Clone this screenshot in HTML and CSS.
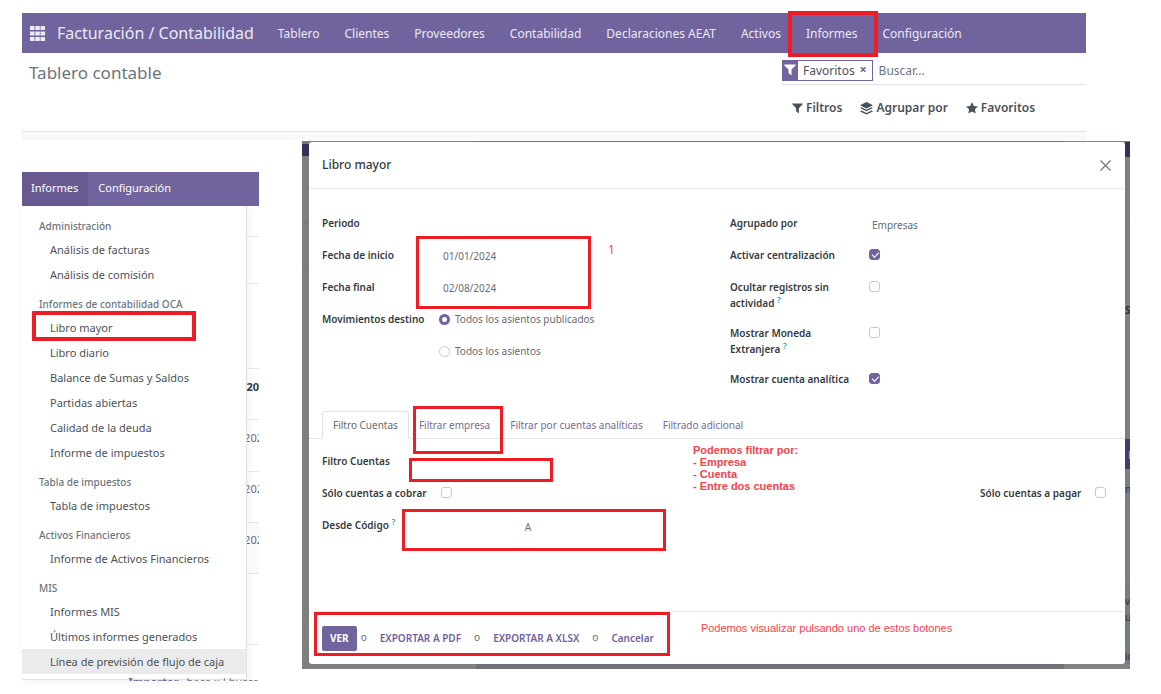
FILE: index.html
```html
<!DOCTYPE html>
<html lang="es">
<head>
<meta charset="utf-8">
<title>Tablero contable</title>
<link rel="stylesheet" href="styles.css">
</head>
<body>
<header class="top">
  <nav class="navbar">
    <button class="apps" aria-label="Aplicaciones">
      <svg viewBox="0 0 15 15" width="15" height="15" fill="currentColor"><path d="M0 0h4.500v4H0zM5.300 0h4.500v4H5.300zM10.500 0H15v4h-4.500zM0 5.500h4.500v4H0zM5.300 5.500h4.500v4H5.300zM10.500 5.500H15v4h-4.500zM0 11h4.500v4H0zM5.300 11h4.500v4H5.300zM10.500 11H15v4h-4.500z"/></svg>
    </button>
    <a class="brand" href="#">Facturación / Contabilidad</a>
    <a class="nav-link" href="#">Tablero</a>
    <a class="nav-link" href="#">Clientes</a>
    <a class="nav-link" href="#">Proveedores</a>
    <a class="nav-link" href="#">Contabilidad</a>
    <a class="nav-link" href="#">Declaraciones AEAT</a>
    <a class="nav-link" href="#">Activos</a>
    <a class="nav-link mark mark-nav" href="#">Informes</a>
    <a class="nav-link" href="#">Configuración</a>
  </nav>
  <div class="control">
    <h1 class="page-title">Tablero contable</h1>
    <div class="search">
      <div class="search-box">
        <span class="facet">
          <span class="facet-icon"><svg viewBox="0 0 12 12" width="12" height="12" fill="currentColor"><path d="M.6.5h10.8q.6.3.2.9L7.500 5.600V11.500L4.500 9V5.600L.4 1.400Q0 .8.600.5z"/></svg></span>
          <span class="facet-name">Favoritos</span>
          <button class="facet-remove" aria-label="Quitar">×</button>
        </span>
        <input class="search-input" type="text" placeholder="Buscar..." aria-label="Buscar">
      </div>
      <div class="filters">
        <button class="filter"><svg viewBox="0 0 12 12" width="11" height="11" fill="currentColor"><path d="M.6.5h10.8q.6.3.2.9L7.500 5.600V11.500L4.500 9V5.600L.4 1.400Q0 .8.600.5z"/></svg>Filtros</button>
        <button class="filter"><svg viewBox="0 0 13 13" width="13" height="13" fill="currentColor"><path d="M6.500 0 13 3.200 6.500 6.400 0 3.200z"/><path d="M1.500 5.300 6.500 7.700l5-2.400 1.500.8-6.500 3.200L0 6.100z"/><path d="M1.500 8.600 6.500 11l5-2.400 1.500.8-6.500 3.200L0 9.400z"/></svg>Agrupar por</button>
        <button class="filter"><svg viewBox="0 0 12 12" width="12" height="12" fill="currentColor"><path d="M6 0l1.800 3.900 4.200.5-3.100 2.900.8 4.300L6 9.500l-3.700 2.100.8-4.300L0 4.400l4.200-.5z"/></svg>Favoritos</button>
      </div>
    </div>
  </div>
</header>

<main class="stage">
  <section class="menu-panel">
    <nav class="menu-bar">
      <a class="menu-tab active" href="#">Informes</a>
      <a class="menu-tab" href="#">Configuración</a>
    </nav>
    <div class="menu-body">
      <div class="menu">
        <h2 class="menu-head">Administración</h2>
        <a class="menu-item" href="#">Análisis de facturas</a>
        <a class="menu-item" href="#">Análisis de comisión</a>
        <h2 class="menu-head">Informes de contabilidad OCA</h2>
        <a class="menu-item mark mark-menu" href="#">Libro mayor</a>
        <a class="menu-item" href="#">Libro diario</a>
        <a class="menu-item" href="#">Balance de Sumas y Saldos</a>
        <a class="menu-item" href="#">Partidas abiertas</a>
        <a class="menu-item" href="#">Calidad de la deuda</a>
        <a class="menu-item" href="#">Informe de impuestos</a>
        <h2 class="menu-head">Tabla de impuestos</h2>
        <a class="menu-item" href="#">Tabla de impuestos</a>
        <h2 class="menu-head">Activos Financieros</h2>
        <a class="menu-item" href="#">Informe de Activos Financieros</a>
        <h2 class="menu-head">MIS</h2>
        <a class="menu-item" href="#">Informes MIS</a>
        <a class="menu-item" href="#">Últimos informes generados</a>
        <a class="menu-item current" href="#">Línea de previsión de flujo de caja</a>
      </div>
      <div class="behind">
        <div class="cell h31"></div>
        <div class="cell h47"></div>
        <div class="cell h85"></div>
        <div class="cell h51 year">20</div>
        <div class="cell h52 date">202</div>
        <div class="cell h51 date">202</div>
        <div class="cell h51 date tint">202</div>
        <div class="cell h71"></div>
      </div>
    </div>
    <div class="cutoff"><b>Importar</b> <span>hace × l busca</span></div>
  </section>

  <section class="backdrop">
    <div class="edge-left"></div>
    <form class="dialog">
      <header class="dialog-head">
        <h2 class="dialog-title">Libro mayor</h2>
        <button class="close" type="button" aria-label="Cerrar"><svg viewBox="0 0 11 11" width="11" height="11" stroke="currentColor" stroke-width="1.300" fill="none"><path d="M.5.5l10 10M10.500.5l-10 10"/></svg></button>
      </header>
      <div class="fields">
        <div class="col">
          <div class="row"><span class="label">Periodo</span></div>
          <div class="dates mark mark-dates">
            <div class="row"><label class="label" for="ini">Fecha de inicio</label><input class="text" id="ini" type="text" value="01/01/2024"></div>
            <div class="row"><label class="label" for="fin">Fecha final</label><input class="text" id="fin" type="text" value="02/08/2024"></div>
            <span class="note note-one">1</span>
          </div>
          <div class="row"><span class="label">Movimientos destino</span><label class="option"><input class="radio" type="radio" name="mov" checked>Todos los asientos publicados</label></div>
          <div class="row"><span class="label"></span><label class="option"><input class="radio" type="radio" name="mov">Todos los asientos</label></div>
        </div>
        <div class="col col-right">
          <div class="row"><label class="label" for="grp">Agrupado por</label><select class="select" id="grp"><option>Empresas</option></select></div>
          <div class="row"><label class="label" for="cen">Activar centralización</label><input class="check" id="cen" type="checkbox" checked></div>
          <div class="row tall"><label class="label" for="ocu">Ocultar registros sin actividad <span class="help">?</span></label><input class="check" id="ocu" type="checkbox"></div>
          <div class="row tall"><label class="label" for="mon">Mostrar Moneda Extranjera <span class="help">?</span></label><input class="check" id="mon" type="checkbox"></div>
          <div class="row"><label class="label" for="ana">Mostrar cuenta analítica</label><input class="check" id="ana" type="checkbox" checked></div>
        </div>
      </div>
      <div class="tabs">
        <button class="tab selected" type="button">Filtro Cuentas</button>
        <button class="tab mark mark-tab" type="button">Filtrar empresa</button>
        <button class="tab" type="button">Filtrar por cuentas analíticas</button>
        <button class="tab" type="button">Filtrado adicional</button>
      </div>
      <div class="pane">
        <div class="col">
          <div class="row"><label class="label" for="cta">Filtro Cuentas</label><span class="account mark mark-account"><input class="text" id="cta" type="text"></span></div>
          <div class="row"><label class="label" for="cob">Sólo cuentas a cobrar</label><input class="check" id="cob" type="checkbox"></div>
          <div class="row"><label class="label" for="cod">Desde Código <span class="help">?</span></label><span class="range mark mark-range"><input class="text" id="cod" type="text"><span class="to">A</span><input class="text" type="text" aria-label="Hasta código"></span></div>
        </div>
        <p class="note note-list">Podemos filtrar por:<br>- Empresa<br>- Cuenta<br>- Entre dos cuentas</p>
        <div class="payable"><label class="label" for="pag">Sólo cuentas a pagar</label><input class="check" id="pag" type="checkbox"></div>
      </div>
      <footer class="dialog-foot">
        <div class="actions mark mark-actions">
          <button class="primary" type="button">VER</button>
          <span class="or">o</span>
          <button class="link" type="button">EXPORTAR A PDF</button>
          <span class="or">o</span>
          <button class="link" type="button">EXPORTAR A XLSX</button>
          <span class="or">o</span>
          <button class="link" type="button">Cancelar</button>
        </div>
        <p class="note">Podemos visualizar pulsando uno de estos botones</p>
      </footer>
    </form>
    <div class="edge-right">
      <span class="bit s">S</span>
      <span class="bit e">E</span>
      <span class="bit n">n</span>
      <span class="bit v">v</span>
      <span class="bit u">u</span>
      <span class="bit i">ic</span>
    </div>
  </section>
</main>
</body>
</html>
```

FILE: styles.css
```css
* { box-sizing: border-box; }
body {
  margin: 0;
  padding: 13px 31px 12px 22px;
  background: #fff;
  color: #4c5157;
  font: 12px/16px "Noto Sans", "Open Sans", sans-serif;
}
h1, h2, p { margin: 0; font-weight: 400; }
a { color: inherit; text-decoration: none; }
button, input, select { font: inherit; color: inherit; background: none; border: 0; padding: 0; margin: 0; }
svg { display: block; flex: none; }

/* Red highlight frames */
.mark { position: relative; }
.mark::after { content: ""; position: absolute; border: 3px solid #ee1c25; pointer-events: none; }
.mark-nav::after { inset: -2px -21px -4px -18px; border-width: 4px; }
.mark-menu::after { inset: -4px 50px -1px 10px; border-width: 4px; }
.mark-dates::after { inset: -11px 126px 2px 94px; }
.mark-tab::after { inset: -6px -4px -16px 3px; }
.mark-account::after { inset: 0; }
.mark-range::after { inset: 0; }
.mark-actions::after { inset: 0; }

/* Top bar */
.top { margin-right: 44px; border-bottom: 8px solid #f8f9fa; }
.navbar { display: flex; align-items: center; gap: 25px; height: 40px; padding-left: 8px; background: #71639e; color: #eceaf3; white-space: nowrap; }
.apps { color: #eceaf3; margin-right: -13px; }
.brand { font-size: 16px; line-height: 24px; margin-right: -1px; }
.nav-link { line-height: 40px; height: 40px; padding-top: 1px; }
.control { display: flex; justify-content: space-between; height: 79px; padding-left: 7px; border-bottom: 1px solid #dee2e6; }
.page-title { font-size: 17px; line-height: 40px; color: #6c757d; }
.search { width: 304px; }
.search-box { display: flex; align-items: center; height: 32px; padding-top: 3px; border-bottom: 1px solid #dee2e6; }
.facet { display: flex; align-items: center; height: 21px; border: 1px solid #71639e; }
.facet-icon { display: flex; align-items: center; align-self: stretch; padding: 0 2px 0 1px; background: #71639e; color: #fff; }
.facet-name { padding: 2px 5px 0 5px; }
.facet-remove { padding-right: 5px; font-weight: 600; line-height: 16px; }
.search-input { flex: 1; min-width: 0; margin-left: 6px; padding-top: 2px; }
.search-input::placeholder { color: #6c757d; opacity: 1; }
.filters { display: flex; gap: 18px; padding: 15px 0 0 10px; }
.filter { display: flex; align-items: center; gap: 3px; font-weight: 600; color: #495057; white-space: nowrap; }

.stage { display: flex; align-items: flex-start; gap: 43px; }

/* Reports menu */
.menu-panel { flex: none; width: 237px; margin-top: 32px; font-size: 11px; }
.menu-bar { display: flex; height: 34px; background: #71639e; color: #fff; line-height: 32px; }
.menu-tab { padding: 0 10px; }
.menu-tab.active { padding-left: 9px; background: #685a91; }
.menu-body { display: flex; }
.menu { flex: 1; padding: 10px 0 5px; border: 1px solid #dee2e6; border-width: 0 1px 1px 0; box-shadow: 2px 2px 8px #0000000f; }
.menu-head { padding-left: 17px; font-size: 10px; line-height: 21px; font-weight: 500; color: #6c757d; }
.menu-item + .menu-head { margin-top: 7px; }
.menu-item { display: block; padding-left: 28px; line-height: 25px; white-space: nowrap; }
.menu-item.current { background: #ebebeb; }
.behind { width: 12px; overflow: hidden; }
.cell { display: flex; align-items: center; justify-content: flex-end; border-bottom: 1px solid #e3e5e8; }
.h31 { height: 31px; }
.h47 { height: 47px; }
.h51 { height: 51px; }
.h52 { height: 52px; }
.h71 { height: 71px; }
.h85 { height: 85px; }
.year { padding-bottom: 15px; font-weight: 700; color: #343a4a; }
.date { padding-bottom: 16px; margin-right: -4px; color: #5c6b84; }
.tint { background: #fafafa; }
.cutoff { display: flex; justify-content: flex-end; gap: 8px; height: 5px; margin-top: -4px; overflow: hidden; white-space: nowrap; line-height: 12px; color: #6c757d; }
.cutoff b { color: #71639e; }

/* Dialog and the dimmed page around it */
.backdrop {
  flex: 1;
  display: flex;
  min-width: 0;
  margin-top: 1px;
  padding: 1px 0 5px;
  background: linear-gradient(90deg, #7f7f7f 21%, #707078 21%, #707078 92%, #7f8383 92%);
}
.edge-left { width: 7px; background: linear-gradient(#777 2px, #3a3057 2px, #3a3057 14px, #7f7f7f 14px, #7f7f7f 80px, #747474 80px, #747474 81px, #7f7f7f 81px, #7f7f7f 127px, #747474 127px, #747474 128px, #7f7f7f 128px); }
.edge-right {
  position: relative;
  width: 5px;
  overflow: hidden;
  color: #2b3040;
  background: linear-gradient(#3a3057 15px, #7f7f7f 15px, #7f7f7f 81px, #747474 81px, #747474 82px, #7f7f7f 82px, #7f7f7f 297px, #463c66 297px, #463c66 327px, #778080 327px, #778080 365px, #7f7f7f 365px, #7f7f7f 441px, #757e7f 441px);
}
.bit { position: absolute; left: 0; font-size: 10px; }
.s { top: 160px; font-weight: 700; }
.e { top: 305px; left: 3px; color: #aaa4bb; }
.n { top: 339px; }
.v { top: 451px; }
.u { top: 467px; }
.i { top: 506px; }

.dialog { flex: 1; min-width: 0; background: #fff; border-radius: 3px; font-size: 10px; color: #666b71; }
.dialog-head { display: flex; align-items: center; justify-content: space-between; height: 47px; padding: 0 14px 0 13px; border-bottom: 1px solid #e9ebed; }
.dialog-title { font-size: 12px; font-weight: 500; color: #343a40; }
.close { color: #777; }
.fields { display: grid; grid-template-columns: 1fr 1fr; padding: 26px 13px 0; height: 222px; }
.row { display: flex; align-items: flex-start; min-height: 32px; }
.label { flex: none; width: 117px; color: #343a40; font-weight: 600; white-space: nowrap; }
.col-right { padding-left: 13px; }
.col-right .label { width: 139px; }
.tall { min-height: 46px; }
.tall .label { padding-right: 30px; white-space: normal; }
.help { font-size: 8px; line-height: 8px; vertical-align: 4px; color: #1ba0b8; }
.text { width: 100px; margin: 1px 0 0 4px; }
.option { display: flex; align-items: center; gap: 5px; white-space: nowrap; }
.radio { appearance: none; width: 11px; height: 11px; border: 1px solid #c5c9cd; border-radius: 50%; }
.radio:checked { border: 3px solid #71639e; }
.select { appearance: none; width: 120px; margin: 2px 0 0 3px; line-height: 16px; }
.check { appearance: none; flex: none; width: 11px; height: 11px; margin-top: 2px; border: 1px solid #c5c9cd; border-radius: 3px; }
.check:checked { border-color: #71639e; background: #71639e; }
.check:checked::after { content: ""; display: block; width: 6px; height: 3px; margin: 2px 0 0 2px; border: solid #fff; border-width: 0 0 1px 1px; transform: rotate(-45deg); }
.tabs { display: flex; height: 28px; padding-left: 13px; border-bottom: 1px solid #e3e5e8; }
.tab { height: 28px; padding: 0 9px; border: 1px solid transparent; color: #746b98; white-space: nowrap; }
.selected { padding: 0 10px; border-color: #dee2e6 #dee2e6 #fff; border-radius: 3px 3px 0 0; color: #666b71; }
.pane { display: grid; grid-template-columns: 371px 1fr auto; height: 172px; padding: 14px 19px 0 13px; }
.pane .check { margin-left: 2px; }
.account { width: 144px; height: 24px; margin: 5px 0 -5px -30px; padding: 3px; }
.account .text { width: 130px; margin-top: 0; }
.range { display: flex; justify-content: center; align-items: center; width: 264px; height: 42px; margin: -8px 0 0 -37px; padding: 0 12px 6px 0; }
.range .text { flex: 1; min-width: 0; width: 0; margin: 0 4px; }
.to { flex: none; }
.payable { display: flex; align-items: flex-start; padding-top: 32px; }
.payable .label { width: 113px; }
.note { color: #f4434b; font: 11px/12px "Liberation Sans", Arial, sans-serif; }
.note-one { position: absolute; top: -5px; left: 286px; font: 12px/16px "Noto Sans", sans-serif; }
.note-list { font-weight: 700; margin-top: -9px; }
.dialog-foot { display: flex; align-items: flex-start; gap: 31px; height: 53px; border-top: 1px solid #ececee; padding-left: 5px; }
.actions { display: flex; align-items: center; gap: 13px; height: 44px; padding: 8px 16px 0 8px; white-space: nowrap; }
.primary { height: 25px; padding: 0 8px; border-radius: 2px; background: #71639e; color: #fff; font-weight: 700; }
.primary + .or { margin-left: -9px; }
.or { margin-top: -3px; }
.link { color: #71639e; font-weight: 600; }
.dialog-foot .note { padding-top: 10px; }
```
